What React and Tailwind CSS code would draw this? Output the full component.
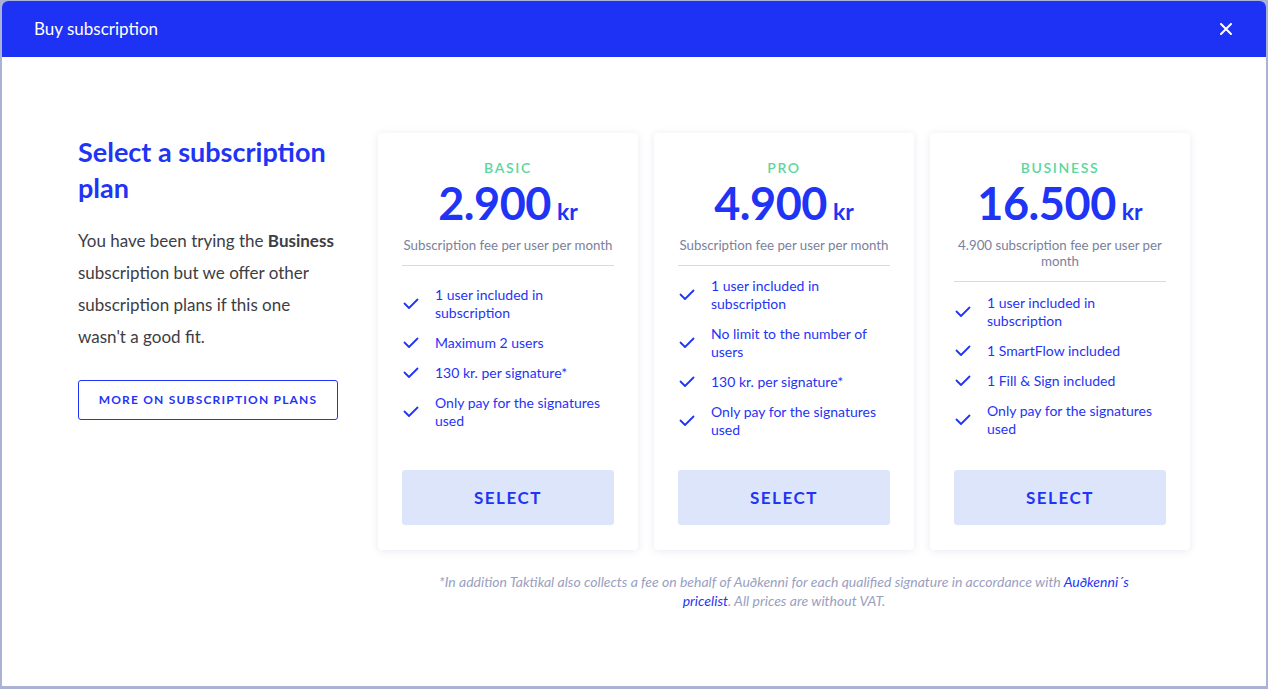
import { Fragment } from 'react'

const plans = [
  {
    name: 'BASIC',
    price: '2.900',
    fee: 'Subscription fee per user per month',
    features: ['1 user included in subscription', 'Maximum 2 users', '130 kr. per signature*', 'Only pay for the signatures used'],
  },
  {
    name: 'PRO',
    price: '4.900',
    fee: 'Subscription fee per user per month',
    features: ['1 user included in subscription', 'No limit to the number of users', '130 kr. per signature*', 'Only pay for the signatures used'],
  },
  {
    name: 'BUSINESS',
    price: '16.500',
    fee: '4.900 subscription fee per user per month',
    features: ['1 user included in subscription', '1 SmartFlow included', '1 Fill & Sign included', 'Only pay for the signatures used'],
  },
]

function Check() {
  return (
    <svg width="16" height="12" viewBox="0 0 16 12" fill="none" className="shrink-0">
      <path d="M1.5 5.5 L6 10 L14.5 1.5" stroke="#1f34f5" strokeWidth="1.8" strokeLinecap="round" strokeLinejoin="round" />
    </svg>
  )
}

function PlanCard({ plan }) {
  return (
    <div className="w-[260px] h-[417px] bg-white rounded-[4px] shadow-[0_1px_8px_rgba(40,50,120,0.10)] px-6 pt-6 pb-[25px] flex flex-col">
      <div className="text-center text-[14px] leading-[20px] font-semibold tracking-[0.12em] text-[#5cd69e] mt-px">{plan.name}</div>
      <div className="h-[51px] flex items-baseline justify-center gap-[6px] text-[#1f34f5]">
        <span className="text-[45px] leading-[51px] font-bold tracking-[-0.01em]">{plan.price}</span>
        <span className="text-[23px] leading-[51px] font-bold">kr</span>
      </div>
      <div className="mt-2 text-center text-[13.3px] leading-[16px] text-[#7b819c]">{plan.fee}</div>
      <div className="h-px bg-[#d3d9f2] mt-3 shrink-0" />
      {/* feature list sits centred in the space left above the button */}
      <div className="flex-1 flex items-center mt-px mb-[22px]">
        <ul className="flex flex-col gap-3 w-full">
          {plan.features.map((f) => (
            <li key={f} className="flex items-center gap-4 pl-[1px]">
              <Check />
              <span className="text-[14px] leading-[18px] text-[#1f34f5]">{f}</span>
            </li>
          ))}
        </ul>
      </div>
      <button className="h-[55px] w-full shrink-0 rounded-[3px] bg-[#dde5fb] text-[#1f34f5] text-[17px] font-bold tracking-[0.09em]">
        SELECT
      </button>
    </div>
  )
}

export default function App() {
  return (
    <div className="h-screen bg-[#aab3d3] pt-px px-[2px] pb-[3px]" style={{ fontFamily: 'Lato, "Noto Sans", sans-serif' }}>
      <div className="h-full bg-white rounded-t-[6px] overflow-hidden flex flex-col">
        {/* Header */}
        <div className="h-[56px] bg-[#1e32f5] flex items-center justify-between pl-[32px] pr-[34px] shrink-0">
          <span className="text-white text-[17px]">Buy subscription</span>
          <button className="text-white">
            <svg width="12" height="12" viewBox="0 0 12 12" fill="none">
              <path d="M1 1 L11 11 M11 1 L1 11" stroke="white" strokeWidth="2" strokeLinecap="round" />
            </svg>
          </button>
        </div>

        {/* Body */}
        <div className="flex-1 pt-[76px] flex flex-col items-center">
          <div className="flex gap-10 items-start">
            <div className="w-[260px] pt-px">
              <h1 className="text-[27px] leading-[36px] font-bold text-[#1f34f5]">Select a subscription plan</h1>
              <p className="mt-[19px] text-[17px] leading-[32px] text-[#3d3d45]">
                You have been trying the <b className="font-bold">Business</b> subscription but we offer other subscription plans if this one wasn't a good fit.
              </p>
              <button className="mt-[27px] w-[260px] h-[40px] border border-[#1f34f5] rounded-[3px] text-[#1f34f5] text-[12px] font-bold tracking-[0.1em]">
                MORE ON SUBSCRIPTION PLANS
              </button>
            </div>
            <div className="flex gap-4">
              {plans.map((p) => (
                <Fragment key={p.name}>
                  <PlanCard plan={p} />
                </Fragment>
              ))}
            </div>
          </div>
          <p className="ml-[300px] w-[720px] mt-[22px] text-center italic text-[14px] leading-[19px] text-[#9aa0bf]">
            *In addition Taktikal also collects a fee on behalf of Auðkenni for each qualified signature in accordance with <a className="text-[#1f34f5]">Auðkenni´s pricelist</a>. All prices are without VAT.
          </p>
        </div>
      </div>
    </div>
  )
}
